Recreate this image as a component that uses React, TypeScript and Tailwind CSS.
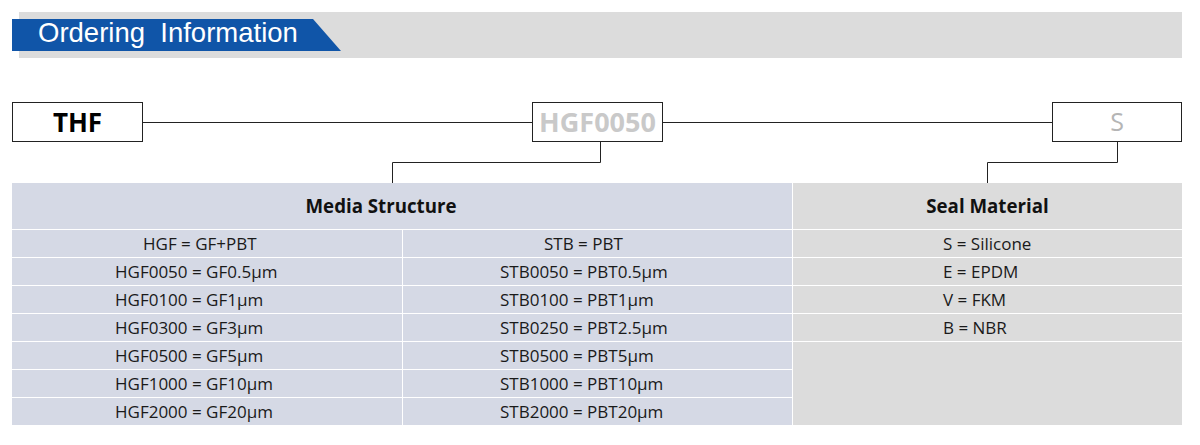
import React from "react";

const mediaRows = [
  ["HGF = GF+PBT", "STB = PBT"],
  ["HGF0050 = GF0.5µm", "STB0050 = PBT0.5µm"],
  ["HGF0100 = GF1µm", "STB0100 = PBT1µm"],
  ["HGF0300 = GF3µm", "STB0250 = PBT2.5µm"],
  ["HGF0500 = GF5µm", "STB0500 = PBT5µm"],
  ["HGF1000 = GF10µm", "STB1000 = PBT10µm"],
  ["HGF2000 = GF20µm", "STB2000 = PBT20µm"],
];

const sealRows = ["S = Silicone", "E = EPDM", "V = FKM", "B = NBR"];

const App = () => {
  return (
    <div className="w-[1200px] h-[445px] bg-white font-['Open_Sans',sans-serif] text-[#1a1a1a]">
      {/* Section title */}
      <div className="pt-[12px] pl-[19px]">
        <div className="w-[1163px] h-[46px] bg-[#dcdcdc] pt-[7px]">
          <div className="-ml-[7px] w-[329px] h-[32px] bg-[#1055a8] [clip-path:polygon(0_0,301px_0,100%_100%,0_100%)] pl-[26px]">
            <span className="block whitespace-pre font-['Liberation_Sans',Arial,sans-serif] text-[27.5px] leading-[28px] text-white">
              Ordering  Information
            </span>
          </div>
        </div>
      </div>

      {/* Part number boxes */}
      <div className="mt-[44px] ml-[12px] w-[1170px] flex items-center">
        <div className="w-[131px] h-[40px] border border-[#222] flex items-center justify-center font-bold text-[26px] text-black">
          THF
        </div>
        <div className="flex-1 h-px bg-[#222]" />
        <div className="w-[131px] h-[40px] border border-[#222] flex items-center justify-center font-bold text-[27px] text-[#c9c9c9]">
          HGF0050
        </div>
        <div className="flex-1 h-px bg-[#222]" />
        <div className="w-[130px] h-[40px] border border-[#222] flex items-center justify-center text-[25px] text-[#b5b5b5]">
          S
        </div>
      </div>

      {/* Connectors */}
      <svg width="1200" height="41" className="block" fill="none" stroke="#222" strokeWidth="1">
        <path d="M600.5 0V20.5H392.5V41" />
        <path d="M1117.5 0V20.5H987.5V41" />
      </svg>

      {/* Table */}
      <div className="ml-[12px] grid grid-cols-[390px_389px_389px] grid-rows-[46px_repeat(7,27px)] gap-px bg-white w-[1170px] text-[17px]">
        <div className="col-span-2 bg-[#d5d9e5] flex items-center justify-center pr-[42px] font-bold text-[18.7px] text-[#111]">
          Media Structure
        </div>
        <div className="col-start-3 row-start-1 bg-[#dcdcdc] flex items-center justify-center font-bold text-[18.7px] text-[#111]">
          Seal Material
        </div>
        {mediaRows.map((row, i) => (
          <React.Fragment key={i}>
            <div
              className={
                i === 0
                  ? "col-start-1 bg-[#d5d9e5] flex items-center pl-[131px]"
                  : "col-start-1 bg-[#d5d9e5] flex items-center pl-[103px]"
              }
              style={{ gridRowStart: i + 2 }}
            >
              {row[0]}
            </div>
            <div
              className={
                i === 0
                  ? "col-start-2 bg-[#d5d9e5] flex items-center pl-[141px]"
                  : "col-start-2 bg-[#d5d9e5] flex items-center pl-[97px]"
              }
              style={{ gridRowStart: i + 2 }}
            >
              {row[1]}
            </div>
          </React.Fragment>
        ))}
        {sealRows.map((s, i) => (
          <div
            key={s}
            className="col-start-3 bg-[#dcdcdc] flex items-center pl-[150px]"
            style={{ gridRowStart: i + 2 }}
          >
            {s}
          </div>
        ))}
        <div className="col-start-3 row-start-6 row-span-3 bg-[#dcdcdc]" />
      </div>
    </div>
  );
};

export default App;
